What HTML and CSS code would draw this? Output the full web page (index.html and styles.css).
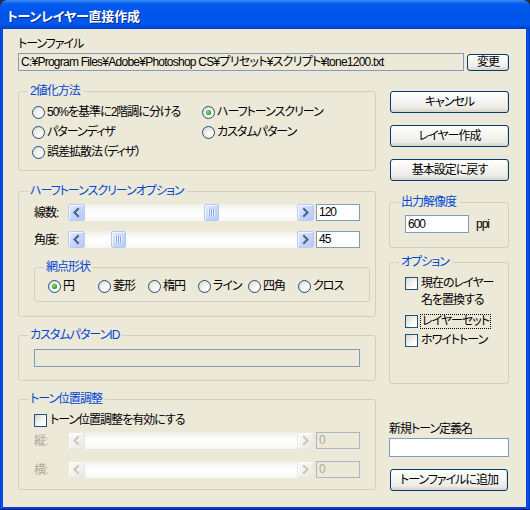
FILE: index.html
```html
<!DOCTYPE html>
<html lang="ja">
<head>
<meta charset="utf-8">
<title>トーンレイヤー直接作成</title>
<link rel="stylesheet" href="styles.css">
</head>
<body>
<div class="window">
  <div class="titlebar"><span class="title">トーンレイヤー直接作成</span></div>
  <div class="client">
    <div class="file-label">トーンファイル</div>
    <div class="file-row">
      <div class="field readonly path">C:¥Program Files¥Adobe¥Photoshop CS¥プリセット¥スクリプト¥tone1200.txt</div>
      <button class="btn btn-small">変更</button>
    </div>
    <div class="columns">
      <div class="col-left">
        <div class="group g-binarize">
          <span class="legend">2値化方法</span>
          <div class="radio-grid">
            <label class="opt"><span class="radio"></span>50%を基準に2階調に分ける</label>
            <label class="opt"><span class="radio on"></span>ハーフトーンスクリーン</label>
            <label class="opt"><span class="radio"></span>パターンディザ</label>
            <label class="opt"><span class="radio"></span>カスタムパターン</label>
            <label class="opt"><span class="radio"></span>誤差拡散法（ディザ）</label>
          </div>
        </div>

        <div class="group g-halftone">
          <span class="legend">ハーフトーンスクリーンオプション</span>
          <div class="slider-row">
            <span class="slider-label">線数:</span>
            <div class="slider">
              <span class="arrow"><svg viewBox="0 0 15 15" width="15" height="15"><polyline points="9,4 5.5,7.5 9,11"/></svg></span>
              <div class="track"><span class="thumb" style="margin-left:119px"></span></div>
              <span class="arrow"><svg viewBox="0 0 15 15" width="15" height="15"><polyline points="6,4 9.5,7.5 6,11"/></svg></span>
            </div>
            <div class="field num">120</div>
          </div>
          <div class="slider-row second">
            <span class="slider-label">角度:</span>
            <div class="slider">
              <span class="arrow"><svg viewBox="0 0 15 15" width="15" height="15"><polyline points="9,4 5.5,7.5 9,11"/></svg></span>
              <div class="track"><span class="thumb" style="margin-left:26px"></span></div>
              <span class="arrow"><svg viewBox="0 0 15 15" width="15" height="15"><polyline points="6,4 9.5,7.5 6,11"/></svg></span>
            </div>
            <div class="field num">45</div>
          </div>
          <div class="group subgroup">
            <span class="legend">網点形状</span>
            <div class="shape-row">
              <label class="opt shape"><span class="radio on"></span>円</label>
              <label class="opt shape"><span class="radio"></span>菱形</label>
              <label class="opt shape"><span class="radio"></span>楕円</label>
              <label class="opt shape"><span class="radio"></span>ライン</label>
              <label class="opt shape"><span class="radio"></span>四角</label>
              <label class="opt shape"><span class="radio"></span>クロス</label>
            </div>
          </div>
        </div>

        <div class="group g-custom">
          <span class="legend">カスタムパターンID</span>
          <div class="field readonly wide"></div>
        </div>

        <div class="group g-position">
          <span class="legend">トーン位置調整</span>
          <label class="check-row"><span class="checkbox"></span><span class="check-text">トーン位置調整を有効にする</span></label>
          <div class="slider-row disabled">
            <span class="slider-label">縦:</span>
            <div class="slider">
              <span class="arrow"><svg viewBox="0 0 15 15" width="15" height="15"><polyline points="9,4 5.5,7.5 9,11"/></svg></span>
              <div class="track"></div>
              <span class="arrow"><svg viewBox="0 0 15 15" width="15" height="15"><polyline points="6,4 9.5,7.5 6,11"/></svg></span>
            </div>
            <div class="field num">0</div>
          </div>
          <div class="slider-row disabled third">
            <span class="slider-label">横:</span>
            <div class="slider">
              <span class="arrow"><svg viewBox="0 0 15 15" width="15" height="15"><polyline points="9,4 5.5,7.5 9,11"/></svg></span>
              <div class="track"></div>
              <span class="arrow"><svg viewBox="0 0 15 15" width="15" height="15"><polyline points="6,4 9.5,7.5 6,11"/></svg></span>
            </div>
            <div class="field num">0</div>
          </div>
        </div>
      </div>

      <div class="col-right">
        <button class="btn btn-side">キャンセル</button>
        <button class="btn btn-side">レイヤー作成</button>
        <button class="btn btn-side">基本設定に戻す</button>

        <div class="group g-output">
          <span class="legend">出力解像度</span>
          <div class="res-row">
            <div class="field res">600</div>
            <span class="unit">ppi</span>
          </div>
        </div>

        <div class="group g-options">
          <span class="legend">オプション</span>
          <label class="check-row multi"><span class="checkbox"></span><span class="check-text">現在のレイヤー<br>名を置換する</span></label>
          <label class="check-row set"><span class="checkbox"></span><span class="check-text focus">レイヤーセット</span></label>
          <label class="check-row white"><span class="checkbox"></span><span class="check-text">ホワイトトーン</span></label>
        </div>

        <div class="new-label">新規トーン定義名</div>
        <div class="field new-name"></div>
        <button class="btn btn-add">トーンファイルに追加</button>
      </div>
    </div>
  </div>
</div>
</body>
</html>
```

FILE: styles.css
```css
* {
  box-sizing: border-box;
}

html, body {
  margin: 0;
  padding: 0;
  background: #2b2b2b;
}

body {
  width: 530px;
  height: 510px;
  font-family: "Liberation Sans", "Noto Sans CJK JP", sans-serif;
  font-size: 12px;
  line-height: 14px;
  letter-spacing: -1px;
  font-feature-settings: "palt" 1;
  color: #000;
}

.window {
  width: 530px;
  height: 510px;
  display: flex;
  flex-direction: column;
  border-radius: 7px 7px 0 0;
  background: linear-gradient(to right, #0a3fd0 0, #0058ee 2px, #0a3fd0 3px, #0a3fd0 526px, #0058ee 528px, #0031b8 530px);
  border-bottom: 1px solid #001d91;
  overflow: hidden;
}

.titlebar {
  height: 29px;
  flex: none;
  padding: 2px 0 0 7px;
  background: linear-gradient(to bottom, #3d8ef7 0, #0c63ec 3px, #0058ee 6px, #0055e8 14px, #0058ee 24px, #0048d8 27px, #003dc4 29px);
  border-radius: 7px 7px 0 0;
}

.title {
  display: block;
  color: #fff;
  font-family: "Noto Sans CJK JP", sans-serif;
  font-weight: bold;
  font-size: 13px;
  line-height: 27px;
  letter-spacing: -0.2px;
  text-shadow: 1px 1px 0 #0a2a8c;
}

.client {
  flex: none;
  height: 478px;
  margin: 0 4px 0 3px;
  padding: 8px 17px 0 15px;
  background: #ece9d8;
}

.file-label {
  line-height: 14px;
}

.file-row {
  display: flex;
  align-items: center;
  gap: 3px;
  margin-top: 2px;
}

.field {
  border: 1px solid #7f9db9;
  background: #fff;
  padding: 0 2px;
  white-space: nowrap;
  overflow: hidden;
}

.field.readonly {
  background: #ece9d8;
}

.path {
  width: 446px;
  height: 18px;
  line-height: 16px;
  letter-spacing: -0.75px;
}

.btn {
  font: inherit;
  letter-spacing: inherit;
  font-feature-settings: "palt" 1;
  color: #000;
  padding: 0;
  border: 1px solid #003c74;
  border-radius: 3px;
  background: linear-gradient(to bottom, #ffffff 0, #f6f6f3 40%, #ecebe6 80%, #d6d0c5 100%);
  box-shadow: inset 0 -1px 0 #dcd6c9, inset -1px 0 0 #e3ded3;
  line-height: 14px;
  text-align: center;
}

.btn-small {
  width: 42px;
  height: 17px;
  line-height: 14px;
}

.columns {
  display: flex;
  gap: 13px;
  margin-top: 20px;
}

.col-left {
  width: 358px;
  display: flex;
  flex-direction: column;
}

.col-right {
  width: 120px;
  display: flex;
  flex-direction: column;
}

.group {
  position: relative;
  border: 1px solid #d0d0bf;
  border-radius: 3px;
}

.legend {
  position: absolute;
  top: -8px;
  left: 9px;
  padding: 0 3px 0 2px;
  background: #ece9d8;
  color: #0046d5;
  line-height: 14px;
  white-space: nowrap;
}

/* 2値化方法 */
.g-binarize {
  height: 80px;
  padding: 10px 0 0 13px;
}

.radio-grid {
  display: grid;
  grid-template-columns: 170px auto;
  grid-auto-rows: 20px;
}

.opt {
  display: flex;
  align-items: center;
  gap: 2px;
  white-space: nowrap;
}

.radio {
  position: relative;
  flex: none;
  width: 13px;
  height: 13px;
  border-radius: 50%;
  border: 1px solid #1c5180;
  background: radial-gradient(circle at 70% 70%, #ffffff 0, #f3f2ec 40%, #d8d5c8 100%);
}

.radio.on::after {
  content: "";
  position: absolute;
  left: 3px;
  top: 3px;
  width: 5px;
  height: 5px;
  border-radius: 50%;
  background: radial-gradient(circle at 40% 40%, #8fe38f 0, #21a121 60%, #1a8a1a 100%);
}

/* ハーフトーン */
.g-halftone {
  height: 126px;
  margin-top: 20px;
  padding: 12px 0 0 15px;
}

.slider-row {
  display: flex;
  align-items: center;
  height: 17px;
}

.slider-row.second {
  margin-top: 10px;
}

.slider-label {
  width: 34px;
  flex: none;
}

.slider {
  width: 246px;
  height: 17px;
  display: flex;
  flex: none;
  background: linear-gradient(to bottom, #eeede5 0, #fbfbf9 35%, #ffffff 60%, #f7f6f2 100%);
}

.arrow {
  width: 17px;
  height: 17px;
  flex: none;
  display: flex;
  align-items: center;
  justify-content: center;
  border: 1px solid #b7cbf5;
  border-radius: 2px;
  background: linear-gradient(135deg, #e6eefe 0, #c8d8fc 45%, #b5c9f7 100%);
  box-shadow: inset 1px 1px 0 #f2f6ff;
}

.arrow svg polyline {
  fill: none;
  stroke: #4d6185;
  stroke-width: 2;
  stroke-linecap: square;
}

.track {
  flex: 1;
  display: flex;
}

.thumb {
  width: 15px;
  height: 17px;
  flex: none;
  border: 1px solid #b2c7f3;
  border-radius: 2px;
  background: linear-gradient(135deg, #e4ecfe 0, #c9d8fb 50%, #b9ccf7 100%);
  box-shadow: inset 1px 1px 0 #f2f6ff;
  display: flex;
  align-items: center;
  justify-content: center;
}

.thumb::before {
  content: "";
  width: 7px;
  height: 7px;
  background: repeating-linear-gradient(to right, #eef4ff 0, #eef4ff 1px, #8aa8e8 1px, #8aa8e8 2px);
}

.field.num {
  width: 44px;
  height: 17px;
  margin-left: 2px;
  line-height: 15px;
  padding: 0 2px;
}

.subgroup {
  width: 336px;
  height: 35px;
  margin-top: 19px;
  padding: 8px 0 0 13px;
}

.shape-row {
  display: flex;
  height: 20px;
}

.opt.shape {
  width: 50px;
}

/* カスタムパターンID */
.g-custom {
  height: 46px;
  margin-top: 18px;
  padding: 13px 0 0 15px;
}

.field.wide {
  width: 326px;
  height: 18px;
}

/* トーン位置調整 */
.g-position {
  height: 91px;
  margin-top: 18px;
  padding: 13px 0 0 15px;
}

.check-row {
  display: flex;
  align-items: center;
  height: 14px;
  gap: 3px;
  white-space: nowrap;
}

.checkbox {
  flex: none;
  width: 13px;
  height: 13px;
  border: 1px solid #1c5180;
  background: linear-gradient(135deg, #d6d5cc 0, #ececE6 35%, #fbfbf9 70%, #ffffff 100%);
}

.g-position .slider-row.disabled {
  margin-top: 5px;
}

.g-position .slider-row.third {
  margin-top: 12px;
}

.disabled .slider-label {
  color: #aca899;
}

.disabled .arrow {
  border-color: #e8e6dd;
  background: linear-gradient(135deg, #fbfbf8 0, #f1f0ea 60%, #e9e7df 100%);
  box-shadow: inset 1px 1px 0 #ffffff;
}

.disabled .arrow svg polyline {
  stroke: #c9c7ba;
}

.disabled .field.num {
  background: #ece9d8;
  border-color: #a7b7c9;
  color: #aca899;
}

/* right column */
.btn-side {
  width: 119px;
  height: 22px;
  margin-left: 1px;
}

.btn-side + .btn-side {
  margin-top: 12px;
}

.g-output {
  height: 46px;
  margin-top: 21px;
  padding: 12px 0 0 15px;
}

.res-row {
  display: flex;
  align-items: center;
}

.field.res {
  width: 64px;
  height: 18px;
  line-height: 16px;
}

.unit {
  margin-left: 7px;
}

.g-options {
  height: 122px;
  margin-top: 14px;
  padding: 12px 0 0 15px;
}

.check-row.multi {
  height: auto;
  align-items: flex-start;
  line-height: 17px;
}

.check-row.multi .checkbox {
  margin-top: 2px;
}

.check-row.set {
  margin-top: 5px;
}

.check-row.white {
  margin-top: 5px;
}

.check-text.focus {
  outline: 1px dotted #000;
  outline-offset: 0;
  padding: 0 1px;
  line-height: 13px;
}

.new-label {
  margin-top: 38px;
  line-height: 14px;
}

.field.new-name {
  width: 120px;
  height: 19px;
  margin-top: 2px;
}

.btn-add {
  width: 118px;
  height: 22px;
  margin-top: 12px;
  margin-left: 1px;
}
```
